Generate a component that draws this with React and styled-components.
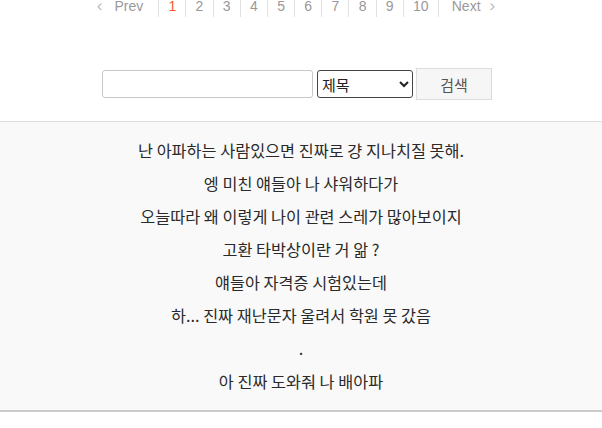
import styled, { createGlobalStyle } from "styled-components";

const GlobalStyle = createGlobalStyle`
  body {
    margin: 0;
    background: #fff;
    font-family: "Liberation Sans", "Noto Sans CJK KR", sans-serif;
  }
`;

const Page = styled.div`
  width: 602px;
  overflow: hidden;
`;

const Pager = styled.ul`
  display: flex;
  justify-content: center;
  list-style: none;
  margin: -5px 0 0;
  padding: 0 10px 0 0;
  font-size: 14px;
  line-height: 22px;
  color: #999;
`;

const PageItem = styled.li`
  padding: 0 9.2px;
  border-left: 1px solid #e2e2e2;
  color: ${(p) => (p.$active ? "#f25c2a" : "#999")};
  display: flex;
  align-items: center;
  gap: 9px;
`;

const PrevItem = styled(PageItem)`
  padding: 0 15px 0 4px;
  border-left: none;
  gap: 12px;
`;

const NextItem = styled(PageItem)`
  padding: 0 4px 0 13px;
`;

const Chevron = styled.span`
  font-size: 17px;
  color: #bbb;
`;

const SearchRow = styled.form`
  display: flex;
  justify-content: center;
  align-items: center;
  gap: 4px;
  margin: 51px 0 21px;
  padding-right: 8px;
`;

const Input = styled.input`
  width: 211px;
  height: 28px;
  box-sizing: border-box;
  border: 1px solid #c8c8c8;
  border-radius: 3px;
`;

const Select = styled.select`
  width: 96px;
  height: 28px;
  box-sizing: border-box;
  border: 1px solid #444;
  border-radius: 3px;
  font-family: "Noto Sans CJK KR", sans-serif;
  font-size: 15px;
  color: #222;
  background: #fff;
`;

const Button = styled.button`
  width: 76px;
  height: 32px;
  margin-left: -1px;
  border: 1px solid #dcdcdc;
  background: #f6f6f6;
  color: #555;
  font-family: "Noto Sans CJK KR", sans-serif;
  font-size: 15px;
`;

const Board = styled.div`
  border-top: 1px solid #dcdcdc;
  border-bottom: 2px solid #cbcbcb;
  background: #f9f9f9;
  padding: 12px 0;
`;

const Line = styled.p`
  margin: 0;
  text-align: center;
  font-family: "Noto Sans CJK KR", sans-serif;
  font-size: 16.3px;
  line-height: 33px;
  color: #2a2a2a;
`;

const lines = [
  "난 아파하는 사람있으면 진짜로 걍 지나치질 못해.",
  "엥 미친 얘들아 나 샤워하다가",
  "오늘따라 왜 이렇게 나이 관련 스레가 많아보이지",
  "고환 타박상이란 거 앎 ?",
  "얘들아 자격증 시험있는데",
  "하... 진짜 재난문자 울려서 학원 못 갔음",
  ".",
  "아 진짜 도와줘 나 배아파",
];

export default function App() {
  return (
    <Page>
      <GlobalStyle />
      <Pager>
        <PrevItem>
          <Chevron>‹</Chevron> Prev
        </PrevItem>
        {[1, 2, 3, 4, 5, 6, 7, 8, 9, 10].map((n) => (
          <PageItem key={n} $active={n === 1}>
            {n}
          </PageItem>
        ))}
        <NextItem>
          Next <Chevron>›</Chevron>
        </NextItem>
      </Pager>
      <SearchRow onSubmit={(e) => e.preventDefault()}>
        <Input type="text" />
        <Select defaultValue="title">
          <option value="title">제목</option>
          <option value="content">내용</option>
        </Select>
        <Button type="submit">검색</Button>
      </SearchRow>
      <Board>
        {lines.map((t, i) => (
          <Line key={i}>{t}</Line>
        ))}
      </Board>
    </Page>
  );
}
